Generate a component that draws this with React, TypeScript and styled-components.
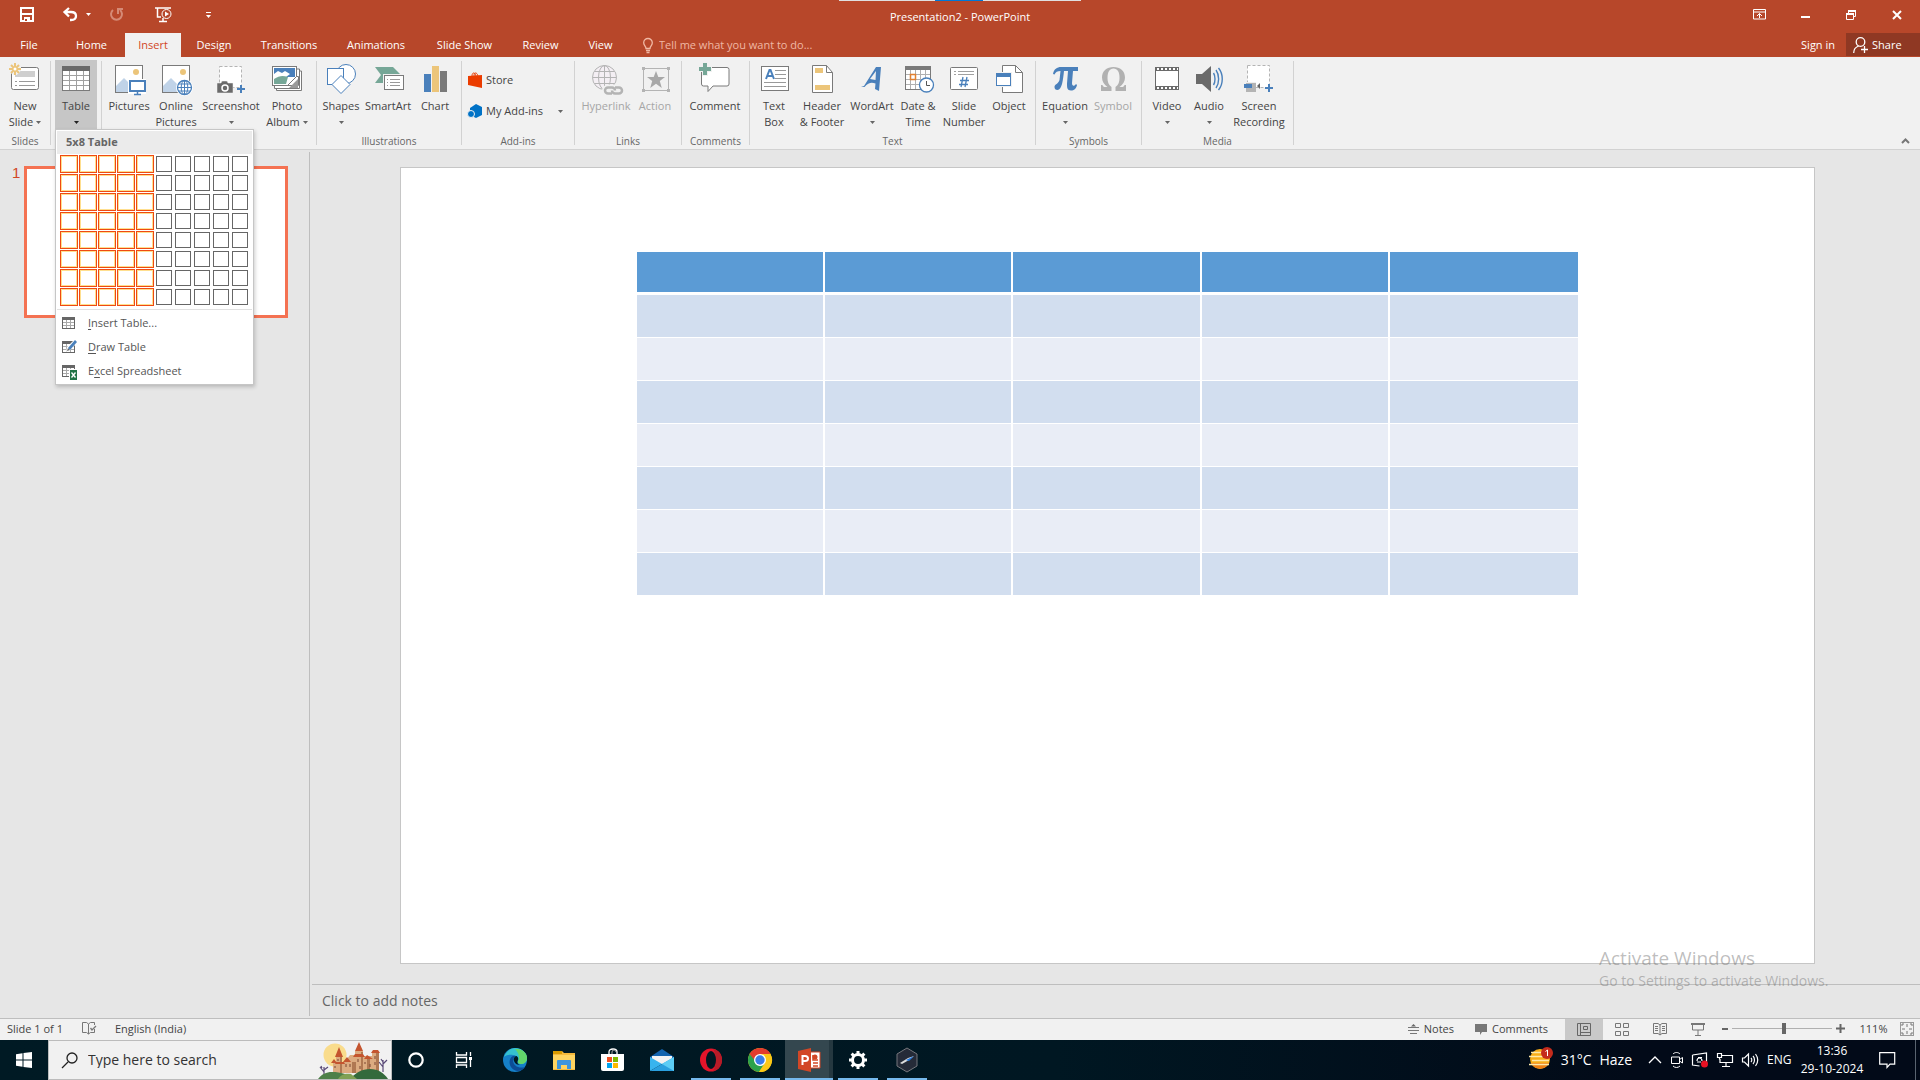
import React from "react";
import styled, { createGlobalStyle, css } from "styled-components";

const BLUE = "#4a80bb";
const GRAY = "#7a7a7a";
const GREEN = "#76a797";
const GOLD = "#ecc57a";
const MUTED = "#b4b4b4";

const GlobalStyle = createGlobalStyle`
  * { box-sizing: border-box; }
  body {
    margin: 0;
    font-family: "Open Sans", "Noto Sans", sans-serif;
    font-size: 11px;
    line-height: 16px;
    color: #444;
    background: #e6e6e6;
  }
  button, input, select { font: inherit; color: inherit; }
  button { border: 0; padding: 0; margin: 0; background: none; }
  svg { display: block; flex: none; overflow: visible; }
`;

const Window = styled.div`
  display: flex;
  flex-direction: column;
  height: 100vh;
  overflow: hidden;
`;

/* ---------- title bar ---------- */
const Chrome = styled.header`
  background: #b7472a;
  color: #fff;
`;
const TitleBar = styled.div`
  display: grid;
  grid-template-columns: 1fr auto 1fr;
  align-items: center;
  height: 33px;
`;
const QuickAccess = styled.div`
  display: flex;
  align-items: center;
  padding: 0 0 4px 20px;
`;
const QuickButton = styled.button<{ $space: number }>`
  margin-right: ${(p) => p.$space}px;
`;
const Title = styled.h1`
  margin: 0;
  font-size: 11px;
  font-weight: 400;
`;
const WindowButtons = styled.div`
  display: flex;
  justify-content: flex-end;
  padding-bottom: 4px;
`;
const WindowButton = styled.button`
  display: grid;
  place-items: center;
  width: 46px;
  height: 24px;
`;
const RecorderStrip = styled.div`
  position: absolute;
  top: 0;
  left: 50%;
  display: flex;
  width: 242px;
  height: 1px;
  transform: translateX(-50%);
  background: linear-gradient(90deg, #e0e0e0 96px, #0078d7 96px, #0078d7 144px, #e0e0e0 144px);
`;

/* ---------- tabs ---------- */
const TabRow = styled.div`
  display: flex;
  align-items: stretch;
  height: 24px;
`;
const TabList = styled.nav`
  display: flex;
`;
const Tab = styled.button<{ $active?: boolean; $width: number }>`
  width: ${(p) => p.$width}px;
  white-space: nowrap;
  ${(p) => p.$active && css`
    background: #f1f1f1;
    color: #d24726;
  `}
`;
const TellMe = styled.label`
  display: flex;
  flex: 1;
  align-items: center;
  gap: 6px;
  padding-left: 15px;
  color: #f0b8a4;
`;
const TellInput = styled.input`
  width: 220px;
  padding: 0;
  border: 0;
  outline: 0;
  background: transparent;
  &::placeholder { color: #f0b8a4; opacity: 1; }
`;
const SignIn = styled.button`
  padding: 0 11px;
`;
const Share = styled.button`
  display: flex;
  align-items: center;
  gap: 4px;
  width: 74px;
  height: 23px;
  padding-left: 7px;
  background: #8f3823;
`;

/* ---------- ribbon ---------- */
const Ribbon = styled.div`
  position: relative;
  z-index: 2;
  display: flex;
  height: 93px;
  background: #f1f1f1;
  border-bottom: 1px solid #d2d2d2;
`;
const Group = styled.section<{ $width: number }>`
  display: flex;
  flex-direction: column;
  flex: 0 0 ${(p) => p.$width}px;
  padding-top: 3px;
`;
const GroupBody = styled.div<{ $pad: number }>`
  position: relative;
  display: flex;
  height: 73px;
  padding-left: ${(p) => p.$pad}px;
`;
const GroupName = styled.h2`
  margin: 0;
  color: #666;
  font-size: 10px;
  font-weight: 400;
  line-height: 16px;
  text-align: center;
`;
const Divider = styled.div`
  flex: 0 0 1px;
  margin: 4px 0;
  background: #d2d2d2;
`;
const Tool = styled.button<{ $width: number; $pressed?: boolean }>`
  display: flex;
  flex-direction: column;
  align-items: center;
  flex: 0 0 ${(p) => p.$width}px;
  white-space: nowrap;
  background: ${(p) => (p.$pressed ? "#c6c6c6" : "transparent")};
  &:disabled { color: #a6a6a6; }
`;
const ToolLine = styled.span`
  display: flex;
  align-items: center;
  justify-content: center;
  gap: 3px;
  height: 16px;
`;
const AddIns = styled.div`
  display: flex;
  flex-direction: column;
  gap: 15px;
  padding: 12px 0 0 6px;
`;
const SmallTool = styled.button`
  display: flex;
  align-items: center;
  gap: 4px;
  height: 16px;
`;
const CaretSpace = styled.span`
  padding-left: 11px;
`;
const Collapse = styled.button`
  align-self: flex-end;
  margin: 0 10px 5px auto;
`;

/* ---------- table menu ---------- */
const Menu = styled.div`
  position: absolute;
  top: 69px;
  left: 4px;
  z-index: 5;
  width: 199px;
  padding: 1px;
  background: #fff;
  border: 1px solid #c6c6c6;
  box-shadow: 1px 2px 4px rgba(0, 0, 0, 0.2);
  color: #555;
`;
const MenuTitle = styled.h3`
  margin: 0;
  padding: 3px 9px;
  height: 23px;
  background: #ebebeb;
  color: #666;
  font-size: 11px;
  font-weight: 700;
`;
const Picker = styled.div`
  display: grid;
  grid-template-columns: repeat(10, 18px);
  grid-auto-rows: 18px;
  gap: 1px;
  padding: 1px 3px 3px;
  border-bottom: 1px solid #e1e1e1;
`;
const PickerCell = styled.button<{ $on: boolean }>`
  background: #fff;
  ${(p) => p.$on
    ? css`
        border: 1px solid #ef4a12;
        box-shadow: inset 0 0 0 1px #ffdf8f;
      `
    : css`
        margin: 1px;
        border: 1px solid #666;
      `}
`;
const MenuList = styled.div`
  padding-top: 1px;
`;
const MenuItem = styled.button`
  display: flex;
  align-items: center;
  gap: 10px;
  width: 100%;
  height: 24px;
  padding-left: 4px;
`;
const Key = styled.span`
  text-decoration: underline;
  text-underline-offset: 2px;
`;

/* ---------- workspace ---------- */
const Workspace = styled.main`
  display: flex;
  flex: 1;
  min-height: 0;
`;
const Thumbnails = styled.aside`
  display: flex;
  align-items: flex-start;
  flex: 0 0 310px;
  gap: 6px;
  margin: 2px 0;
  padding: 14px 21px 0 12px;
  border-right: 1px solid #bebebe;
`;
const SlideNumber = styled.span`
  width: 6px;
  color: #d24726;
  font-family: "Liberation Sans", sans-serif;
  font-size: 15px;
  line-height: 14px;
`;
const Thumbnail = styled.button`
  flex: 1;
  height: 152px;
  border: 3px solid #f47252;
  background: #fff;
`;
const Editor = styled.section`
  display: flex;
  flex: 1;
  flex-direction: column;
  padding-left: 2px;
`;
const Canvas = styled.div`
  display: flex;
  flex: 1;
  padding: 17px 105px 20px 88px;
`;
const Slide = styled.div`
  flex: 1;
  padding-top: 84px;
  background: #fff;
  border: 1px solid #c6c6c6;
`;
const SlideTable = styled.table`
  width: 66.6%;
  margin: 0 auto;
  table-layout: fixed;
  border-spacing: 0;
  th, td {
    height: 43px;
    padding: 0;
    border: 0 solid #fff;
    border-bottom-width: 1px;
  }
  th { background: #5b9bd5; border-bottom-width: 3px; }
  td { background: #e9edf6; }
  tr:nth-child(odd) td { background: #d2deef; }
  th:not(:last-child), td:not(:last-child) { border-right-width: 2px; }
`;
const Notes = styled.div`
  height: 34px;
  padding: 3px 10px;
  border-top: 1px solid #bebebe;
`;
const NotesInput = styled.input`
  width: 50%;
  height: 24px;
  padding: 0;
  border: 0;
  background: transparent;
  font-size: 14px;
  &::placeholder { color: #666; opacity: 1; }
`;
const Watermark = styled.div`
  position: absolute;
  right: 85px;
  bottom: 88px;
  z-index: 3;
  width: 236px;
  color: rgba(110, 110, 110, 0.45);
  font-size: 14px;
  line-height: 22px;
  white-space: nowrap;
  pointer-events: none;
`;
const WatermarkTitle = styled.div`
  font-size: 19px;
  line-height: 24px;
`;

/* ---------- status bar ---------- */
const StatusBar = styled.footer`
  display: flex;
  justify-content: space-between;
  height: 22px;
  background: #f1f1f1;
  border-top: 1px solid #bebebe;
`;
const StatusSide = styled.div<{ $start?: boolean }>`
  display: flex;
  align-items: center;
  gap: ${(p) => (p.$start ? 19 : 0)}px;
  padding: 0 0 2px ${(p) => (p.$start ? 7 : 0)}px;
`;
const StatusButton = styled.button<{ $space?: number }>`
  display: flex;
  align-items: center;
  gap: 5px;
  margin-right: ${(p) => p.$space || 0}px;
`;
const ViewButton = styled.button<{ $active?: boolean }>`
  display: grid;
  place-items: center;
  width: 38px;
  height: 21px;
  margin-bottom: -2px;
  background: ${(p) => (p.$active ? "#c9c9c9" : "transparent")};
`;
const ZoomControls = styled.div`
  display: flex;
  align-items: center;
  gap: 4px;
  padding: 0 6px 0 5px;
`;
const Slider = styled.input`
  appearance: none;
  width: 100px;
  height: 12px;
  margin: 0;
  background: linear-gradient(#b0b0b0, #b0b0b0) center / 100% 1px no-repeat;
  &::-webkit-slider-thumb {
    appearance: none;
    width: 4px;
    height: 11px;
    background: #666;
  }
`;
const ZoomValue = styled.button`
  width: 47px;
  padding-left: 2px;
`;

/* ---------- taskbar ---------- */
const Taskbar = styled.div`
  display: flex;
  height: 40px;
  background: linear-gradient(90deg, #001a24, #001722 55%, #020a18 85%);
  color: #fff;
  font-size: 14px;
`;
const Search = styled.label`
  display: flex;
  align-items: center;
  gap: 10px;
  width: 344px;
  padding: 0 3px 0 12px;
  background: #f1f1f1;
  border: 1px solid #bcbcbc;
  color: #222;
`;
const SearchInput = styled.input`
  flex: 1;
  min-width: 0;
  padding: 0;
  border: 0;
  background: transparent;
  &::placeholder { color: #333; opacity: 1; }
`;
const TaskApps = styled.div`
  display: flex;
  gap: 1px;
  padding-left: 3px;
`;
const TaskButton = styled.button<{ $open?: boolean; $current?: boolean }>`
  display: grid;
  place-items: center;
  width: 48px;
  height: 40px;
  background:
    ${(p) => (p.$open || p.$current
      ? `linear-gradient(#76b9ed, #76b9ed) bottom / ${p.$current ? 48 : 40}px 2px no-repeat,`
      : "")}
    ${(p) => (p.$current ? "linear-gradient(90deg, #34474f 44px, #253840 44px)" : "transparent")};
`;
const Tray = styled.div`
  display: flex;
  align-items: center;
  margin-left: auto;
`;
const Weather = styled.button`
  display: flex;
  align-items: center;
  gap: 8px;
  margin-right: 16px;
`;
const TrayIcons = styled.div`
  display: flex;
  align-items: center;
  gap: 9px;
  margin-right: 8px;
`;
const Language = styled.button`
  width: 24px;
  font-size: 12px;
`;
const Clock = styled.button`
  width: 82px;
  margin-right: 6px;
  font-size: 12px;
  line-height: 18px;
`;
const ShowDesktop = styled.button`
  width: 5px;
  height: 40px;
  margin-left: 19px;
  border-left: 1px solid #5a6470;
`;

/* ---------- drawings ---------- */
type SvgProps = { w: number; h?: number; children: React.ReactNode };
const Svg = ({ w, h = w, children }: SvgProps) => (
  <svg width={w} height={h} viewBox={`0 0 ${w} ${h}`} fill="none" aria-hidden="true">{children}</svg>
);
const Caret = ({ color = "#666" }: { color?: string }) => (
  <Svg w={5} h={3}><path d="M0 0h5L2.500 3z" fill={color} /></Svg>
);

const icons: Record<string, React.ReactNode> = {
  newSlide: <>
    <rect x="5.500" y="7.500" width="27" height="22" rx="2" fill="#fff" stroke={GRAY} />
    <path d="M11 11h18v6H9v-3z" fill="#cfcfcf" />
    <path d="M13 21.500h16M13 25.500h16M9 21.500h2M9 25.500h2" stroke="#999" />
    <path d="M9 3v12M3 9h12M5 5l8 8M13 5l-8 8" stroke="#f1f1f1" strokeWidth="4" />
    <path d="M9 3v12M3 9h12M5 5l8 8M13 5l-8 8" stroke={GOLD} strokeWidth="2" />
    <circle cx="9" cy="9" r="1.500" fill="#fff" />
  </>,
  table: <>
    <rect x="5.500" y="6.500" width="27" height="24" fill="#fff" stroke={GRAY} />
    <path d="M5 6h28v5H5z" fill="#6a6a6a" />
    <path d="M12.500 11v19M19.500 11v19M26.500 11v19M6 15.500h26M6 20.500h26M6 25.500h26" stroke="#a0a0a0" />
  </>,
  pictures: <>
    <rect x="5.500" y="5.500" width="27" height="27" fill="#fff" stroke={GRAY} />
    <circle cx="26" cy="12" r="3" fill={GOLD} />
    <path d="M6 32v-6l8-8 6 6v8z" fill="#c0d3e8" />
    <rect x="18" y="19" width="18" height="15" fill="#fff" />
    <rect x="20" y="21" width="15" height="10" fill="#fff" stroke={BLUE} strokeWidth="2" />
    <path d="M27.500 32v2M24 34.500h7" stroke={BLUE} strokeWidth="1.500" />
  </>,
  online: <>
    <rect x="5.500" y="5.500" width="27" height="27" fill="#fff" stroke={GRAY} />
    <circle cx="26" cy="12" r="3" fill={GOLD} />
    <path d="M6 32v-6l8-8 8 8v6z" fill="#c0d3e8" />
    <circle cx="27.500" cy="27.500" r="8.500" fill="#fff" />
    <circle cx="27.500" cy="27.500" r="7" stroke={BLUE} strokeWidth="1.300" />
    <ellipse cx="27.500" cy="27.500" rx="3.300" ry="7" stroke={BLUE} />
    <path d="M20.500 27.500h14M27.500 20.500v14M21.500 24h12M21.500 31h12" stroke={BLUE} />
  </>,
  screenshot: <>
    <rect x="7.500" y="6.500" width="22" height="21" fill="#fff" stroke={MUTED} strokeDasharray="3 2" />
    <path d="M5 23h4l1-2h5l1 2h5v10H5z" fill="#6a6a6a" stroke="#f1f1f1" strokeWidth=".5" />
    <circle cx="13" cy="28" r="3" stroke="#fff" strokeWidth="1.500" />
    <path d="M29 25v8M25 29h8" stroke={BLUE} strokeWidth="2" />
  </>,
  album: <>
    <path d="M8.500 26v4.500h25V11H30" fill="#fff" stroke={GRAY} />
    <path d="M6.500 24v4.500h25V9H29" fill="#fff" stroke={GRAY} />
    <rect x="4.500" y="6.500" width="24" height="19" fill="#fff" stroke={GRAY} />
    <path d="M6 8h21v9H6z" fill={BLUE} />
    <path d="M6 14l4-3 4 2 3-2 5 3-4 3H6z" fill="#fff" />
    <path d="M6 19c5-3 8-4 14-2l-2 7H6z" fill={GREEN} />
    <path d="M19.500 25.500l9-9h2v9z" fill="#fff" stroke={GRAY} />
    <path d="M21 28h9v-9" fill="#999" />
  </>,
  shapes: <>
    <circle cx="24" cy="14" r="9.500" fill="#fff" stroke={BLUE} />
    <rect x="5.500" y="8.500" width="16" height="16" fill="#fff" stroke={BLUE} />
    <path d="M19 15.500l9 9-9 9-9-9z" fill="#fff" stroke={BLUE} />
  </>,
  smartart: <>
    <path d="M6 7h18l8 8-8 8H6l6-8z" fill={GREEN} />
    <rect x="14" y="14" width="22" height="17" fill="#f1f1f1" />
    <rect x="15.500" y="15.500" width="19" height="14" fill="#fff" stroke={GRAY} />
    <path d="M21 19.500h10M21 22.500h10M21 25.500h10M18 19.500h1M18 22.500h1M18 25.500h1" stroke="#999" />
  </>,
  chart: <>
    <path d="M8 14h7v18H8z" fill={BLUE} /><path d="M16 6h7v26h-7z" fill={GOLD} /><path d="M24 11h7v21h-7z" fill={GRAY} />
  </>,
  hyperlink: <>
    <circle cx="17.500" cy="17.500" r="12" fill="#f4eff4" stroke={MUTED} />
    <ellipse cx="17.500" cy="17.500" rx="6" ry="12" stroke={MUTED} />
    <path d="M5.500 17.500h24M17.500 5.500v24M7.500 11.500h20M7.500 23.500h20" stroke={MUTED} />
    <g stroke="#f1f1f1" strokeWidth="6"><rect x="18" y="27.500" width="10" height="6" rx="3" /><rect x="25" y="27.500" width="10" height="6" rx="3" /></g>
    <g stroke={MUTED} strokeWidth="2.500"><path d="M25 33.500h-4a3 3 0 010-6h4a3 3 0 013 3" /><path d="M28 27.500h4a3 3 0 010 6h-4a3 3 0 01-3-3" /></g>
  </>,
  action: <>
    <path d="M7.500 8.500h25v22h-25z" stroke={MUTED} strokeWidth="1" />
    <path d="M6 7h3v3H6zM31 7h3v3h-3zM6 29h3v3H6zM31 29h3v3h-3z" fill={MUTED} />
    <path d="M20 11l2.300 6H29l-5.200 4 2 7-5.800-4.200L14.200 28l2-7-5.200-4h6.700z" fill="#a8a8a8" />
  </>,
  comment: <>
    <path d="M9 7.500h22a2 2 0 012 2V24a2 2 0 01-2 2H17l-5 5.500V26H7.500a2 2 0 01-2-2V10z" fill="#fff" stroke={GRAY} />
    <path d="M9 2v14M2 9h14" stroke="#f1f1f1" strokeWidth="6" />
    <path d="M9 3v12M3 9h12" stroke={GREEN} strokeWidth="4" />
  </>,
  textBox: <>
    <rect x="6.500" y="6.500" width="27" height="24" fill="#fff" stroke={GRAY} />
    <path d="M11 19l3.500-9h1l3.500 9M12 16h6" stroke={BLUE} strokeWidth="2" />
    <path d="M20 10.500h11M20 14.500h11M20 18.500h11M9 22.500h22M9 26.500h22" stroke="#999" />
  </>,
  header: <>
    <path d="M9.500 5.500h14l6 7v20h-20z" fill="#fff" stroke={GRAY} />
    <path d="M23.500 5.500v7h6" stroke={GRAY} />
    <path d="M12 8h8v5h-8zM12 25h15v5H12z" fill={GOLD} />
  </>,
  wordArt: <>
    <path d="M8 27l3-1L23 7h5l-2 24-4-2 .5-5.500c-4-1.500-7-1-11 3.500z" fill={BLUE} />
    <path d="M17 19l6-8-.5 9z" fill="#f1f1f1" />
  </>,
  date: <>
    <rect x="6.500" y="6.500" width="25" height="23" fill="#fff" stroke={GRAY} />
    <path d="M6 6h26v4H6z" fill={GRAY} />
    <path d="M11.500 10v19M16.500 10v19M21.500 10v19M26.500 10v19M7 14.500h24M7 19.500h24M7 24.500h24" stroke="#b0b0b0" />
    <rect x="11.500" y="14.500" width="5" height="5" stroke="#e08030" strokeWidth="1.500" />
    <circle cx="27.500" cy="25" r="7" fill="#fff" stroke={BLUE} strokeWidth="1.300" />
    <path d="M27.500 21v4.500H31" stroke="#555" />
  </>,
  number: <>
    <rect x="5.500" y="7.500" width="27" height="22" rx="1" fill="#fff" stroke={GRAY} />
    <path d="M9 11.500h2M13 11.500h16M9 14.500h2M13 14.500h16" stroke="#a0a0a0" />
    <path d="M18 17l-2 10M22 17l-2 10M15 20.500h9M14 24.500h9" stroke={BLUE} strokeWidth="1.300" />
  </>,
  object: <>
    <path d="M12.500 5.500h13l7 7v20h-20z" fill="#fff" stroke={GRAY} />
    <path d="M25.500 5.500v7h7" stroke={GRAY} />
    <path d="M5 12h17v15H5z" fill="#f1f1f1" />
    <rect x="6.500" y="14" width="14" height="11.500" fill="#fff" stroke={BLUE} />
    <path d="M6 13h15v4H6z" fill={BLUE} />
  </>,
  equation: <>
    <path d="M7 14c1-5 4-7 8-7h17v4h-5l-1 12c0 3 2 4 4 1l1 1c-1 4-3 5.500-6 5.500-4 0-4-3-4-7l1-12.500h-4c-1 9-2 19-6.500 19-2 0-3-1-3-3 0-3 4-3 5-7l1-9c-3 0-5 1-6 3.500z" fill={BLUE} />
  </>,
  symbol: <>
    <path d="M7 31v-6h1.500c.5 1.500 1 2 3 2h2C10 24.500 8 21.500 8 17.500 8 11 13 7 19.500 7S31 11 31 17.500c0 4-2 7-5.500 9.500h2c2 0 2.500-.5 3-2H32v6H21.500v-4c3-2 4-5 4-9 0-6-2-9.500-6-9.500s-6 3.500-6 9.500c0 4 1 7 4 9v4z" fill="#b1b1b1" />
  </>,
  video: <>
    <rect x="7" y="7" width="24" height="23" fill="#6a6a6a" /><rect x="8" y="11" width="22" height="15" fill="#fff" />
    <path d="M9 9h21M9 28h21" stroke="#fff" strokeWidth="2" strokeDasharray="2 2" />
  </>,
  audio: <>
    <path d="M6 14h6l9-8v26l-9-8H6z" fill="#6a6a6a" />
    <path d="M23.500 13c2 3 2 9 0 12M26 10c3.500 5 3.500 13 0 18M28.500 8c5 6 5 16 0 22" stroke={BLUE} strokeWidth="1.400" />
  </>,
  recording: <>
    <rect x="7.500" y="5.500" width="22" height="22" fill="#fff" stroke={MUTED} strokeDasharray="3 2" />
    <path d="M3 22h13v11H3z" fill="#f1f1f1" /><path d="M6 23h10v9H6z" fill={MUTED} />
    <path d="M4 24h8v4H4z" fill={BLUE} />
    <path d="M17 26l3-3v6z" fill="#666" />
    <path d="M29 24v8M25 28h8" stroke={BLUE} strokeWidth="2" />
  </>,
};

type ToolData = { icon: string; lines: string[]; width: number; caret?: boolean; disabled?: boolean };
type GroupData = { name: string; width: number; pad: number; covered?: boolean; tools: ToolData[] };

const groups: GroupData[] = [
  { name: "Slides", width: 50, pad: 0, tools: [{ icon: "newSlide", lines: ["New", "Slide"], width: 50, caret: true }] },
  { name: "Tables", width: 50, pad: 4, covered: true, tools: [{ icon: "table", lines: ["Table"], width: 42, caret: true }] },
  { name: "Images", width: 214, pad: 3, covered: true, tools: [
    { icon: "pictures", lines: ["Pictures"], width: 48 },
    { icon: "online", lines: ["Online", "Pictures"], width: 46 },
    { icon: "screenshot", lines: ["Screenshot"], width: 64, caret: true },
    { icon: "album", lines: ["Photo", "Album"], width: 48, caret: true },
  ] },
  { name: "Illustrations", width: 144, pad: 2, tools: [
    { icon: "shapes", lines: ["Shapes"], width: 44, caret: true },
    { icon: "smartart", lines: ["SmartArt"], width: 50 },
    { icon: "chart", lines: ["Chart"], width: 44 },
  ] },
  { name: "Add-ins", width: 112, pad: 0, tools: [] },
  { name: "Links", width: 106, pad: 2, tools: [
    { icon: "hyperlink", lines: ["Hyperlink"], width: 58, disabled: true },
    { icon: "action", lines: ["Action"], width: 40, disabled: true },
  ] },
  { name: "Comments", width: 67, pad: 3, tools: [{ icon: "comment", lines: ["Comment"], width: 60 }] },
  { name: "Text", width: 285, pad: 4, tools: [
    { icon: "textBox", lines: ["Text", "Box"], width: 40 },
    { icon: "header", lines: ["Header", "& Footer"], width: 56 },
    { icon: "wordArt", lines: ["WordArt"], width: 44, caret: true },
    { icon: "date", lines: ["Date &", "Time"], width: 48 },
    { icon: "number", lines: ["Slide", "Number"], width: 44 },
    { icon: "object", lines: ["Object"], width: 46 },
  ] },
  { name: "Symbols", width: 105, pad: 4, tools: [
    { icon: "equation", lines: ["Equation"], width: 50, caret: true },
    { icon: "symbol", lines: ["Symbol"], width: 46, disabled: true },
  ] },
  { name: "Media", width: 151, pad: 4, tools: [
    { icon: "video", lines: ["Video"], width: 42, caret: true },
    { icon: "audio", lines: ["Audio"], width: 42, caret: true },
    { icon: "recording", lines: ["Screen", "Recording"], width: 58 },
  ] },
];

const RibbonTool = ({ tool }: { tool: ToolData }) => {
  const [first, second] = tool.lines;
  return (
    <Tool $width={tool.width} $pressed={tool.icon === "table"} disabled={tool.disabled}>
      <Svg w={38}>{icons[tool.icon]}</Svg>
      <ToolLine>{first}</ToolLine>
      {(second || tool.caret) && (
        <ToolLine>{second}{tool.caret && <Caret color={tool.icon === "table" ? "#222" : "#666"} />}</ToolLine>
      )}
    </Tool>
  );
};

const MiniTable = () => <>
  <rect x="1.500" y="1.500" width="12" height="11" fill="#fff" stroke="#666" />
  <path d="M1 1h13v3H1z" fill="#666" />
  <path d="M5.500 4v8M9.500 4v8M2 6.500h11M2 9.500h11" stroke="#aaa" />
</>;

const TableMenu = () => (
  <Menu>
    <MenuTitle>5x8 Table</MenuTitle>
    <Picker>
      {Array.from({ length: 80 }, (_, i) => (
        <PickerCell key={i} $on={i % 10 < 5} aria-label={`${(i % 10) + 1} by ${Math.floor(i / 10) + 1}`} />
      ))}
    </Picker>
    <MenuList>
      <MenuItem><Svg w={17} h={15}><MiniTable /></Svg><span><Key>I</Key>nsert Table...</span></MenuItem>
      <MenuItem>
        <Svg w={17} h={15}><MiniTable /><path d="M5 12l1-5 7-7 3 3-7 7z" fill="#fff" /><path d="M6 11l1-3 2 2z" fill="#666" /><path d="M7 8l7-8 2 2-7 8z" fill={BLUE} /></Svg>
        <span><Key>D</Key>raw Table</span>
      </MenuItem>
      <MenuItem>
        <Svg w={17} h={15}><MiniTable /><rect x="8" y="5" width="9" height="11" fill="#fff" /><rect x="9" y="6" width="7" height="10" fill="#217346" /><path d="M10.500 8.500l4 5M14.500 8.500l-4 5" stroke="#fff" strokeWidth="1.300" /></Svg>
        <span>E<Key>x</Key>cel Spreadsheet</span>
      </MenuItem>
    </MenuList>
  </Menu>
);

const Castle = () => (
  <Svg w={70} h={37}>
    <circle cx="17" cy="13" r="11.500" fill="#f9dc8c" />
    <path d="M15 31V20h3v-5h6v5h5v-3l3-4h5V9h8v5h9v-4h7v21z" fill="#dcab80" />
    <path d="M22 31V15h2v16zM34 31V20h4v11zM43 31V10h2v21zM49 31V17h3v14zM58 31V11h3v20z" fill="#b07852" />
    <path d="M17 15l4-10 4 10zM13 21l3-4 3 4zM37 9l4-9 4 9zM35 15l2-3h8l2 3zM25 20l4-5 4 5zM53 11l2-3h5l2 3zM46 17l3-4 6 4zM18 20h8l1 2H17z" fill="#c4552f" />
    <path d="M17 24v2M20 17v2M28 22v3M32 22v3M40 17v3M42 24v3M47 20v2M52 22v3M57 14v3M57 20v3" stroke="#7a4732" />
    <path d="M6 34V25M6 30l-4-5M6 28l4-3M4 26l-1-2M65 30V18M65 25l-4-5M65 22l4-4M65 20l-2-3" stroke="#5a4a78" strokeWidth="1.200" />
    <path d="M0 37c4-5 8-7 14-7 9 0 16 2 22 7z" fill="#4d8049" />
    <path d="M32 37c5-6 12-10 20-10 8 0 14 4 18 10z" fill="#346a3c" />
    <path d="M20 37c3-5 8-6 13-5l6 5z" fill="#80a154" />
  </Svg>
);

const taskApps: { name: string; open?: boolean; current?: boolean; art: React.ReactNode }[] = [
  { name: "Edge", art: <>
    <circle cx="12" cy="12" r="12" fill="#1580c8" />
    <path d="M1 9C3 3 8 0 12 0c7 0 12 5 12 10 0 4-3 6-6 6-2 0-4-1-3-3 2-5-8-9-14-4z" fill="#35c1d0" />
    <path d="M15 1c6 1 9 5 9 9 0 4-3 6-6 6-2 0-4-1-3-3 2-3 1-8-3-12z" fill="#62d66b" />
    <path d="M10 8c-5 2-5 13 4 15 4 0 7-2 8-4-6 2-12-1-12-7 0-2 1-3 3-4-1-.5-2-.5-3 0z" fill="#0c4c96" />
    <path d="M13 8c-2 1-3 3-2 5 1 3 4 4 6 4-3-1-3-3-2-5 1-2-1-4-2-4z" fill="#001a24" />
  </> },
  { name: "File Explorer", art: <>
    <path d="M1 3h9l2 2h11v17H1z" fill="#f6b93b" /><path d="M1 3h9v3H1z" fill="#d99a00" /><path d="M1 7h22v14H1z" fill="#ffd460" />
    <path d="M5 21v-8q0-1 1-1h12q1 0 1 1v8h-4v-4H9v4z" fill="#3e95dc" />
  </> },
  { name: "Store", art: <>
    <path d="M8 7V4q0-3 4-3t4 3v3" stroke="#fff" strokeWidth="1.300" /><path d="M11 7V4q0-2 2-2t2 2" stroke="#aaa" />
    <path d="M0 6h23v15q0 2-2 2H2q-2 0-2-2z" fill="#fff" />
    <path d="M6 9h5v5H6z" fill="#f25022" /><path d="M12 9h5v5h-5z" fill="#7fba00" /><path d="M6 15h5v5H6z" fill="#00a4ef" /><path d="M12 15h5v5h-5z" fill="#ffb900" />
  </> },
  { name: "Mail", art: <>
    <path d="M0 9l12-8 12 8v4H0z" fill="#1263ae" /><path d="M2 8h20v8H2z" fill="#f2f2f2" />
    <path d="M0 9l12 7-12 7z" fill="#38b4ee" /><path d="M24 9v14H0l12-7z" fill="#2aa0df" /><path d="M24 9v14L12 16z" fill="#5ccdf5" />
  </> },
  { name: "Opera", open: true, art: <>
    <ellipse cx="12" cy="12" rx="11" ry="11.500" fill="#e3142a" /><path d="M14 1c6 1 9 6 9 11s-3 10-9 11c4-6 4-16 0-22z" fill="#b71c28" /><ellipse cx="12" cy="12" rx="5" ry="9" fill="#001722" />
  </> },
  { name: "Chrome", open: true, art: <>
    <circle cx="12" cy="12" r="12" fill="#fbc816" /><path d="M1.600 6A12 12 0 0122.400 6H12L7 15z" fill="#e33b2e" />
    <path d="M1.600 6A12 12 0 0011 24l6-9-9-1z" fill="#2ba24c" /><path d="M12 6h10.400A12 12 0 0111 24l6-9z" fill="#fbc816" />
    <circle cx="12" cy="12" r="6" fill="#fff" /><circle cx="12" cy="12" r="4.700" fill="#3a7de8" />
  </> },
  { name: "PowerPoint", current: true, art: <>
    <path d="M12 4h11v16H12z" fill="#fff" stroke="#d24726" /><path d="M16 7v5h5M16 15h5M16 18h5" stroke="#d24726" strokeWidth="1.500" /><circle cx="18" cy="9" r="2.500" fill="#d24726" />
    <path d="M1 3l13-3v24L1 21z" fill="#d24726" /><path d="M5.500 17V8H8q3 0 3 2.500T8 13H5.500" stroke="#fff" strokeWidth="2" />
  </> },
  { name: "Settings", open: true, art: <>
    <circle cx="12" cy="12" r="5.500" stroke="#fff" strokeWidth="3" />
    <path d="M12 3v3M12 18v3M3 12h3M18 12h3M5.600 5.600l2.200 2.200M16.200 16.200l2.200 2.200M18.400 5.600l-2.200 2.200M7.800 16.200l-2.200 2.200" stroke="#fff" strokeWidth="3" />
  </> },
  { name: "Game Booster", open: true, art: <>
    <path d="M12 0l10 6v12l-10 6-10-6V6z" fill="#252b38" stroke="#75777c" /><path d="M5 15l8-5 6-2-5 4-7 4z" fill="#ddd" /><path d="M11 12l8-4-5 5z" fill="#2179e0" />
  </> },
];

const tabs: [string, number][] = [
  ["File", 58], ["Home", 67], ["Insert", 56], ["Design", 66], ["Transitions", 84],
  ["Animations", 90], ["Slide Show", 87], ["Review", 65], ["View", 55],
];

export default function App() {
  return (
    <Window>
      <GlobalStyle />
      <Chrome>
        <RecorderStrip />
        <TitleBar>
          <QuickAccess>
            <QuickButton aria-label="Save" $space={28}>
              <Svg w={15}><path d="M1 1h12v13H1z" stroke="#fff" strokeWidth="2" /><path d="M2 7h10" stroke="#fff" strokeWidth="2" /><path d="M4 10h6v4H4z" fill="#fff" /><path d="M5 12h2v2H5z" fill="#b7472a" /></Svg>
            </QuickButton>
            <QuickButton aria-label="Undo" $space={8}>
              <Svg w={15}><path d="M6 1L1.500 5 6 9.500M2 5h6c3 0 5 1.500 5 4s-2 4-5 4H7" stroke="#fff" strokeWidth="2.300" /></Svg>
            </QuickButton>
            <QuickButton aria-label="Undo list" $space={18}><Caret color="#fff" /></QuickButton>
            <QuickButton aria-label="Redo" disabled $space={31}>
              <Svg w={15}><path d="M4 3a5.500 5.500 0 107 0M9 7V2h5" stroke="#d58a76" strokeWidth="2" /></Svg>
            </QuickButton>
            <QuickButton aria-label="Start from beginning" $space={34}>
              <Svg w={17} h={15}><path d="M0 1h16M2.500 1v9H6M8 11v4M4 14.500h8" stroke="#fff" strokeWidth="1.500" /><circle cx="11.500" cy="7" r="4.500" fill="#b7472a" stroke="#fff" /><path d="M10 4.500l4 2.500-4 2.500z" fill="#fff" /></Svg>
            </QuickButton>
            <QuickButton aria-label="Customize toolbar" $space={0}>
              <Svg w={5} h={6}><path d="M0 .5h5" stroke="#fff" /><path d="M0 3h5L2.500 6z" fill="#fff" /></Svg>
            </QuickButton>
          </QuickAccess>
          <Title>Presentation2 - PowerPoint</Title>
          <WindowButtons>
            <WindowButton aria-label="Ribbon options"><Svg w={13} h={11}><path d="M.5.500h12v9.500H.500zM.500 3h12M6.500 9V4.500M4 7l2.500-2.500L9 7" stroke="#fff" /></Svg></WindowButton>
            <WindowButton aria-label="Minimize"><Svg w={9} h={10}><path d="M0 7h9" stroke="#fff" strokeWidth="2" /></Svg></WindowButton>
            <WindowButton aria-label="Restore"><Svg w={10}><path d="M.5 4h7v5.500h-7zM2.500 3.500V1h7v5.500H8" stroke="#fff" /><path d="M0 4h8M2 1h8" stroke="#fff" strokeWidth="2" /></Svg></WindowButton>
            <WindowButton aria-label="Close"><Svg w={10}><path d="M1 1l8 8M9 1L1 9" stroke="#fff" strokeWidth="2" /></Svg></WindowButton>
          </WindowButtons>
        </TitleBar>
        <TabRow>
          <TabList>
            {tabs.map(([name, width]) => <Tab key={name} $width={width} $active={name === "Insert"}>{name}</Tab>)}
          </TabList>
          <TellMe>
            <Svg w={10} h={15}><path d="M3 10.500C3 8 .7 7.500.700 4.800a4.300 4.300 0 018.600 0C9.300 7.500 7 8 7 10.500zM3 12.500h4M3.500 14.500h3" stroke="#f0b8a4" strokeWidth="1.300" /></Svg>
            <TellInput aria-label="Tell me" placeholder="Tell me what you want to do..." />
          </TellMe>
          <SignIn>Sign in</SignIn>
          <Share>
            <Svg w={15} h={16}><circle cx="7.500" cy="5" r="4.300" stroke="#fff" strokeWidth="1.300" /><path d="M.7 16c0-4 2-6 5-7M8 12.500h7M11.500 9v7" stroke="#fff" strokeWidth="1.300" /></Svg>
            Share
          </Share>
        </TabRow>
      </Chrome>

      <Ribbon>
        {groups.map((g) => (
          <React.Fragment key={g.name}>
            <Group $width={g.width} aria-label={g.name}>
              <GroupBody $pad={g.pad}>
                {g.tools.map((t) => <RibbonTool key={t.icon} tool={t} />)}
                {g.name === "Tables" && <TableMenu />}
                {g.name === "Add-ins" && (
                  <AddIns>
                    <SmallTool>
                      <Svg w={14} h={16}><path d="M0 4l14-1v13L0 13z" fill="#eb3c00" /><path d="M4 4c0-4 3-4 4 0M6 4c0-4 3-4 4 0" stroke="#eb3c00" /></Svg>
                      Store
                    </SmallTool>
                    <SmallTool>
                      <Svg w={14} h={16}><path d="M8 1l6 3v8l-6 3-4-2V9L2 7V5z" fill="#0072c6" /><circle cx="3" cy="11" r="3.500" fill="#0072c6" stroke="#f1f1f1" /></Svg>
                      My Add-ins
                      <CaretSpace><Caret /></CaretSpace>
                    </SmallTool>
                  </AddIns>
                )}
              </GroupBody>
              {!g.covered && <GroupName>{g.name}</GroupName>}
            </Group>
            <Divider />
          </React.Fragment>
        ))}
        <Collapse aria-label="Collapse ribbon"><Svg w={9} h={6}><path d="M1 5l3.500-3.500L8 5" stroke="#777" strokeWidth="2" /></Svg></Collapse>
      </Ribbon>

      <Workspace>
        <Thumbnails>
          <SlideNumber>1</SlideNumber>
          <Thumbnail aria-label="Slide 1" />
        </Thumbnails>
        <Editor>
          <Canvas>
            <Slide>
              <SlideTable>
                <thead><tr>{[0, 1, 2, 3, 4].map((c) => <th key={c} />)}</tr></thead>
                <tbody>
                  {[0, 1, 2, 3, 4, 5, 6].map((r) => <tr key={r}>{[0, 1, 2, 3, 4].map((c) => <td key={c} />)}</tr>)}
                </tbody>
              </SlideTable>
            </Slide>
          </Canvas>
          <Notes><NotesInput aria-label="Notes" placeholder="Click to add notes" /></Notes>
        </Editor>
      </Workspace>

      <Watermark>
        <WatermarkTitle>Activate Windows</WatermarkTitle>
        Go to Settings to activate Windows.
      </Watermark>

      <StatusBar>
        <StatusSide $start>
          <span>Slide 1 of 1</span>
          <StatusButton aria-label="Spelling"><Svg w={14} h={13}><path d="M6.500 12V2L4.500.500h-4v10h4zl2-1.500M6.500 2l2-1.500h4V3M12.500 7v3.500h-4" stroke="#777" /><path d="M8.500 6l1.500 2 4-4" stroke="#777" strokeWidth="1.300" /></Svg></StatusButton>
          <StatusButton>English (India)</StatusButton>
        </StatusSide>
        <StatusSide>
          <StatusButton $space={21}><Svg w={11} h={12}><path d="M3 3.500L5.500 1 8 3.500z" fill="#666" /><path d="M0 4.500h11M0 7.500h11M2 10.500h7" stroke="#777" /></Svg>Notes</StatusButton>
          <StatusButton $space={17}><Svg w={12} h={12}><path d="M0 1h12v8H7l-2 3V9H0z" fill="#777" /></Svg>Comments</StatusButton>
          <ViewButton $active aria-label="Normal view"><Svg w={14} h={13}><path d="M.5.500h13v12H.500zM3.500.500v12M3.500 9.500h10M6.500 3.500h4v3h-4z" stroke="#666" /></Svg></ViewButton>
          <ViewButton aria-label="Slide sorter"><Svg w={14} h={13}><path d="M.5.500h5v4h-5zM8.500.500h5v4h-5zM.500 8.500h5v4h-5zM8.500 8.500h5v4h-5z" stroke="#777" /></Svg></ViewButton>
          <ViewButton aria-label="Reading view"><Svg w={14} h={13}><path d="M7 2v10M7 2L5 .5H.500v10H5l2 1.500 2-1.500h4.500V.500H9zM2 3.500h3M2 5.500h3M2 7.500h3M9 3.500h3M9 5.500h3M9 7.500h3" stroke="#777" /></Svg></ViewButton>
          <ViewButton aria-label="Slide show"><Svg w={14} h={13}><path d="M0 1h14" stroke="#777" strokeWidth="2" /><path d="M1.500 2v5h11V2M7 7v5M4 12.500h6" stroke="#777" /></Svg></ViewButton>
          <ZoomControls>
            <button aria-label="Zoom out"><Svg w={6} h={10}><path d="M0 5h6" stroke="#666" strokeWidth="2" /></Svg></button>
            <Slider type="range" aria-label="Zoom" min={0} max={100} defaultValue={52} />
            <button aria-label="Zoom in"><Svg w={9} h={9}><path d="M0 4.500h9M4.500 0v9" stroke="#666" strokeWidth="2" /></Svg></button>
            <ZoomValue>111%</ZoomValue>
            <button aria-label="Fit to window"><Svg w={14} h={14}><rect x=".5" y=".5" width="13" height="13" stroke="#999" /><path d="M7 2v3M7 9v3M2 7h3M9 7h3M2 4V2h2M10 2h2v2M12 10v2h-2M4 12H2v-2" stroke="#777" /></Svg></button>
          </ZoomControls>
        </StatusSide>
      </StatusBar>

      <Taskbar>
        <TaskButton aria-label="Start"><Svg w={16}><path d="M0 2.300l6.500-1v6.200H0zM7.500 1.100L16 0v7.500H7.500zM0 8.500h6.500v6.200L0 13.700zM7.500 8.500H16V16l-8.500-1.100z" fill="#fff" /></Svg></TaskButton>
        <Search>
          <Svg w={17}><circle cx="11" cy="6" r="5" stroke="#222" strokeWidth="1.300" /><path d="M7 10l-6 6" stroke="#222" strokeWidth="1.300" /></Svg>
          <SearchInput aria-label="Search" placeholder="Type here to search" />
          <Castle />
        </Search>
        <TaskButton aria-label="Cortana"><Svg w={16}><circle cx="8" cy="8" r="6.700" stroke="#fff" strokeWidth="2.200" /></Svg></TaskButton>
        <TaskButton aria-label="Task view"><Svg w={16}><path d="M.5 0v3h10V0M.500 5.500h10v5H.500zM.500 16v-3h10v3M14.500 0v4M14.500 8v7" stroke="#fff" strokeWidth="1.300" /><path d="M13 5h3v3h-3z" fill="#fff" /></Svg></TaskButton>
        <TaskApps>
          {taskApps.map((a) => (
            <TaskButton key={a.name} aria-label={a.name} $open={a.open} $current={a.current}><Svg w={24}>{a.art}</Svg></TaskButton>
          ))}
        </TaskApps>
        <Tray>
          <Weather>
            <Svg w={24} h={26}><circle cx="11" cy="12" r="10" fill="#f8ad18" /><path d="M2 16a10 10 0 0018 0z" fill="#ee7f13" /><path d="M2 5.500h11M0 9.500h14M3 13.500h17M0 17.500h20" stroke="#ffe9a8" strokeWidth="1.500" /><circle cx="18" cy="6" r="6" fill="#c42b1c" /><path d="M16.500 4.500L18.500 3v6" stroke="#fff" /></Svg>
            <span>31°C</span><span>Haze</span>
          </Weather>
          <TrayIcons>
            <Svg w={14} h={8}><path d="M1 7l6-6 6 6" stroke="#fff" strokeWidth="1.300" /></Svg>
            <Svg w={12} h={16}><path d="M.5 5h8v6.500h-8zM8.500 7.500l3-2v5.500l-3-2M2 2c2-2 5-2 7 0M2 14c2 2 5 2 7 0" stroke="#fff" /></Svg>
            <Svg w={16}><path d="M.5 3l14-2v10M.500 3v10l7 1M6 5.500h4M5 9c0-4 5-4 5 0M5 10h4" stroke="#fff" strokeWidth="1.200" /><circle cx="12.500" cy="12" r="3.500" fill="#e81123" /></Svg>
            <Svg w={16} h={14}><path d="M5 2.500h10.500v7H3V6M9 9.500v4M5 13.500h8M.500.500h4v4h-4zM2.500 4.500v2" stroke="#fff" strokeWidth="1.200" /></Svg>
            <Svg w={17} h={14}><path d="M.5 5h2l4-4v12l-4-4h-2zM9 5c1 1 1 3 0 4M11 3c2 2 2 6 0 8M13.500 1c3 4 3 8 0 12" stroke="#fff" strokeWidth="1.200" /></Svg>
          </TrayIcons>
          <Language>ENG</Language>
          <Clock>13:36<br />29-10-2024</Clock>
          <button aria-label="Notifications"><Svg w={17} h={16}><path d="M.7.700h15v11.500H11L8 15.500v-3.300H.700z" stroke="#fff" strokeWidth="1.200" /></Svg></button>
          <ShowDesktop aria-label="Show desktop" />
        </Tray>
      </Taskbar>
    </Window>
  );
}
